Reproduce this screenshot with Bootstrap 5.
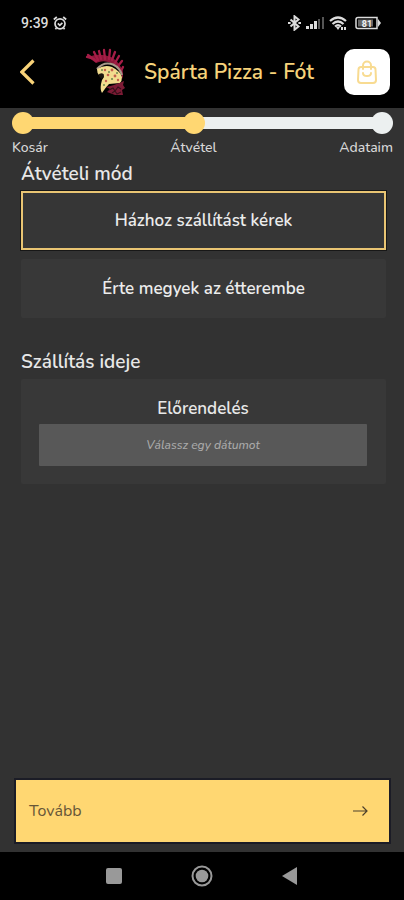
<!DOCTYPE html>
<html lang="hu">
<head>
<meta charset="utf-8">
<meta name="viewport" content="width=device-width, initial-scale=1">
<title>Spárta Pizza - Fót</title>
<link rel="stylesheet" href="https://cdn.jsdelivr.net/npm/bootstrap@5.3.0/dist/css/bootstrap.min.css">
<style>
  :root { --gold: #ffd772; --page: #323232; --panel: #383838; --field: #585858; }
  body { background: var(--page); color: #e8e8e8; font-family: "Nunito", Lato, sans-serif; }
  .status-bar { height: 44px; padding: 2px 22px 0 21px; font: 500 14px/20px Roboto, sans-serif; color: #dcdcdc; }
  .app-bar { height: 64px; padding: 0 14px 8px 20px; }
  .app-title { font-size: 21px; line-height: 28px; font-weight: 600; color: #f6d27a; }
  .brand-gap { gap: 16px; padding-left: 48px; }
  .bag-btn { width: 46px; height: 46px; border-radius: 10px; background: #fff; }
  .steps { margin: 4px 11px 0 12px; }
  .track { left: 8px; right: 8px; top: 5px; height: 12px; border-radius: 0; background: #ecf0f0; }
  .track .progress-bar { background: var(--gold); }
  .step-item { font-size: 14px; line-height: 20px; font-weight: 500; color: #d8d8d8; }
  .dot { width: 22px; height: 22px; margin-bottom: 4px; border-radius: 50%; background: #ecf0f0; }
  .dot.done { background: var(--gold); }
  .content { padding: 6px 18px 0 21px; }
  .section-title { margin-bottom: 7px; font-size: 19px; line-height: 20px; font-weight: 600; }
  .option, .option:hover { height: 59px; border: 2px solid var(--panel); border-radius: 2px; background: var(--panel); color: #ececec; font-size: 17px; font-weight: 600; }
  .btn-check:checked + .option { border-color: #e9c573; border-radius: 0; background: #363636; color: #ececec; outline: 1px solid #171717; }
  .option-gap { gap: 9px; }
  .panel { padding: 20px 19px 18px 18px; background: var(--panel); border-radius: 2px; }
  .panel-label { margin-bottom: 5px; font-size: 17px; line-height: 20px; font-weight: 600; }
  .date-field, .date-field:focus { height: 42px; border: 0; border-radius: 1px; background: var(--field); color: #e8e8e8; font-size: 12px; font-style: italic; font-weight: 500; text-align: center; }
  .date-field::placeholder { color: #aaa; }
  .section-title.second { margin-top: 34px; }
  .action { margin: 0 15px 10px 16px; }
  .next-btn, .next-btn:hover { height: 62px; padding: 0 20px 0 13px; border: 0; border-radius: 0; background: var(--gold); color: #665638; font-size: 16px; outline: 2px solid #1b1c26; }
  .sys-nav { height: 48px; gap: 66px; }
  .sys-nav .btn { width: 22px; height: 22px; }
  .sys-nav svg, .app-bar svg, .status-bar svg { display: block; }
</style>
</head>
<body>
<div class="d-flex flex-column min-vh-100">
  <header class="bg-black">
    <div class="status-bar d-flex align-items-center justify-content-between">
      <div class="d-flex align-items-center gap-1">
        <span>9:39</span>
        <svg width="14" height="14" viewBox="0 0 14 14" fill="none" stroke="#dcdcdc" stroke-width="1.7" aria-hidden="true"><circle cx="7" cy="7.8" r="5"/><path d="M.8 3.5 3.8 1M13.2 3.5 10.2 1M4.8 7.4 6.8 9.4 9.4 6.8M3.4 12l-1 1.3M10.6 12l1 1.3"/></svg>
      </div>
      <div class="d-flex align-items-center gap-1">
        <svg width="15" height="16" viewBox="0 0 15 16" fill="none" stroke="#dcdcdc" stroke-width="2" aria-hidden="true"><path d="M3.5 4.5l8 7-4 3.2V1.3l4 3.2-8 7"/><path d="M1 8h2.6M11.4 8H14"/></svg>
        <svg width="19" height="12" viewBox="0 0 19 12" aria-hidden="true"><path fill="#dcdcdc" d="M0 9h3v3H0zM4 7h3v5H4zM8 4h3v8H8z"/><path fill="#555" d="M12 2h2v10h-2zM16 0h2v12h-2z"/></svg>
        <svg width="18" height="15" viewBox="0 0 18 15" fill="none" stroke="#dcdcdc" stroke-width="2.200" aria-hidden="true"><path d="M1 5Q9-2 17 5M3.500 8Q9 3 14.500 8M6 10.500Q9 8 12 10.500"/><path fill="#dcdcdc" stroke="none" d="M7 11h4L9 14zM12 11h2v3h-2zM15 11h2v3h-2z"/></svg>
        <svg class="ms-1" width="27" height="14" viewBox="0 0 27 14" aria-hidden="true"><path d="M3 1.500h19v11H3Q1 12.500 1 10.500v-7Q1 1.500 3 1.500z" fill="none" stroke="#dcdcdc" stroke-width="1.500"/><path d="M23 3l3 4-3 4z" fill="#dcdcdc"/><path fill="#666" d="M3 3.500h15v7H3z"/><text x="12" y="10.500" text-anchor="middle" font-family="Roboto, sans-serif" font-size="9" font-weight="700" fill="#f2f2f2">81</text></svg>
      </div>
    </div>
    <div class="app-bar d-flex align-items-center">
      <button type="button" class="btn p-0 border-0" aria-label="Vissza">
        <svg width="16" height="26" viewBox="0 0 16 26" fill="none" stroke="#f8d278" stroke-width="3.200"><path d="M13.500 1.500 1.800 13 13.500 24.500"/></svg>
      </button>
      <div class="brand-gap d-flex align-items-center flex-grow-1">
        <svg class="flex-shrink-0" width="44" height="52" viewBox="0 0 44 52" aria-hidden="true">
          <path d="M4 11 11 9Q19 8 27 11Q35 15 39 26L39 33Q36 23 29 18Q22 14 15 16L12 17Z" fill="#8c1739"/>
          <g stroke="#a51d47" stroke-width="2.300" stroke-linecap="round"><path d="M12 15 4 9M10 13 3 11M14 14 10 6M17 13 15 5M21 13 20 4M25 13 26 4M28 14 31 6M31 17 35 10M34 20 38 15M37 25 39 21"/></g>
          <path d="M13 23Q20 15 29 18.500Q36 22 38 29" fill="none" stroke="#a8988a" stroke-width="2"/>
          <path d="M13 23Q21 18 28 21Q36 25 38 31Q38 35 36 37L25 38Q22 41 18 47Q16 44 17 38L18 34 20 31 19 28 15 29Q13 27 13 23Z" fill="#f2dc8e"/>
          <path d="M15 28Q19 26 20 29L18 33Q16 32 15 30Z" fill="#1b150d"/>
          <g fill="#c4614e"><circle cx="21" cy="24" r="1.200"/><circle cx="28" cy="24" r="1.400"/><circle cx="24" cy="29" r="1.300"/><circle cx="31" cy="30" r="1.400"/><circle cx="34" cy="34" r="1.200"/><circle cx="22" cy="35" r="1.200"/></g>
          <g fill="#6c8c4c"><circle cx="18" cy="24" r="1"/><circle cx="25" cy="26" r="1"/><circle cx="28" cy="33" r="1.100"/><circle cx="20" cy="39" r="1"/><circle cx="33" cy="27" r="1"/></g>
          <path d="M22 41Q29 40 40 35L39 39 41 42 38 44 39 49 31 49 23 46 26 43Z" fill="#7c1b35"/>
          <path d="M25 44 29 42 31 45 34 41 37 43M28 47 31 45 33 48 37 46" fill="none" stroke="#351019" stroke-width="1.100"/>
        </svg>
        <h1 class="app-title m-0 text-nowrap">Spárta Pizza - Fót</h1>
      </div>
      <button type="button" class="bag-btn btn p-0 border-0 d-flex align-items-center justify-content-center" aria-label="Kosár">
        <svg width="20" height="24" viewBox="0 0 20 24" fill="none" stroke="#f8db91" stroke-width="2" stroke-linecap="round"><path d="M4 7h12q2.500 0 2.500 2.500L19 20q0 3-3 3H4q-3 0-3-3L1.500 9.500Q1.500 7 4 7zM6 9V5.500a4 4 0 0 1 8 0V9M6 13q0 3 4 3t4-3"/></svg>
      </button>
    </div>
  </header>

  <main class="flex-grow-1">
    <div class="steps position-relative">
      <div class="track progress position-absolute" role="progressbar" aria-label="Rendelés lépései" aria-valuenow="48" aria-valuemin="0" aria-valuemax="100">
        <div class="progress-bar" style="width:48%"></div>
      </div>
      <ol class="list-unstyled d-flex justify-content-between m-0 position-relative">
        <li class="step-item d-flex flex-column align-items-start"><span class="dot done"></span>Kosár</li>
        <li class="step-item d-flex flex-column align-items-center"><span class="dot done"></span>Átvétel</li>
        <li class="step-item d-flex flex-column align-items-end"><span class="dot"></span>Adataim</li>
      </ol>
    </div>

    <form class="content" id="order">
      <h2 class="section-title">Átvételi mód</h2>
      <div class="option-gap d-flex flex-column" role="group" aria-label="Átvételi mód">
        <input class="btn-check" type="radio" name="mode" id="delivery" checked>
        <label class="option btn d-flex align-items-center justify-content-center" for="delivery">Házhoz szállítást kérek</label>
        <input class="btn-check" type="radio" name="mode" id="pickup">
        <label class="option btn d-flex align-items-center justify-content-center" for="pickup">Érte megyek az étterembe</label>
      </div>
      <h2 class="section-title second">Szállítás ideje</h2>
      <div class="panel">
        <label class="panel-label d-block text-center" for="date">Előrendelés</label>
        <input class="date-field form-control" type="text" id="date" placeholder="Válassz egy dátumot">
      </div>
    </form>
  </main>

  <div class="action">
    <button type="submit" form="order" class="next-btn btn w-100 d-flex align-items-center justify-content-between">
      <span>Tovább</span>
      <svg width="17" height="12" viewBox="0 0 17 12" fill="none" stroke="#4d402c" stroke-width="1.200" aria-hidden="true"><path d="M1 6h14M10.500 1.500 15 6l-4.500 4.500"/></svg>
    </button>
  </div>
  <nav class="sys-nav bg-black d-flex align-items-center justify-content-center" aria-label="Rendszer">
    <button type="button" class="btn p-0 border-0" aria-label="Legutóbbiak"><svg width="22" height="22" viewBox="0 0 22 22"><rect x="3" y="3" width="16" height="16" rx="2" fill="#999"/></svg></button>
    <button type="button" class="btn p-0 border-0" aria-label="Kezdőlap"><svg width="22" height="22" viewBox="0 0 22 22"><circle cx="11" cy="11" r="9.500" fill="none" stroke="#999" stroke-width="2"/><circle cx="11" cy="11" r="6.300" fill="#999"/></svg></button>
    <button type="button" class="btn p-0 border-0" aria-label="Vissza"><svg width="22" height="22" viewBox="0 0 22 22"><path d="M18 2v18L3 11z" fill="#999"/></svg></button>
  </nav>
</div>
<script src="https://cdn.jsdelivr.net/npm/bootstrap@5.3.0/dist/js/bootstrap.bundle.min.js"></script>
</body>
</html>
